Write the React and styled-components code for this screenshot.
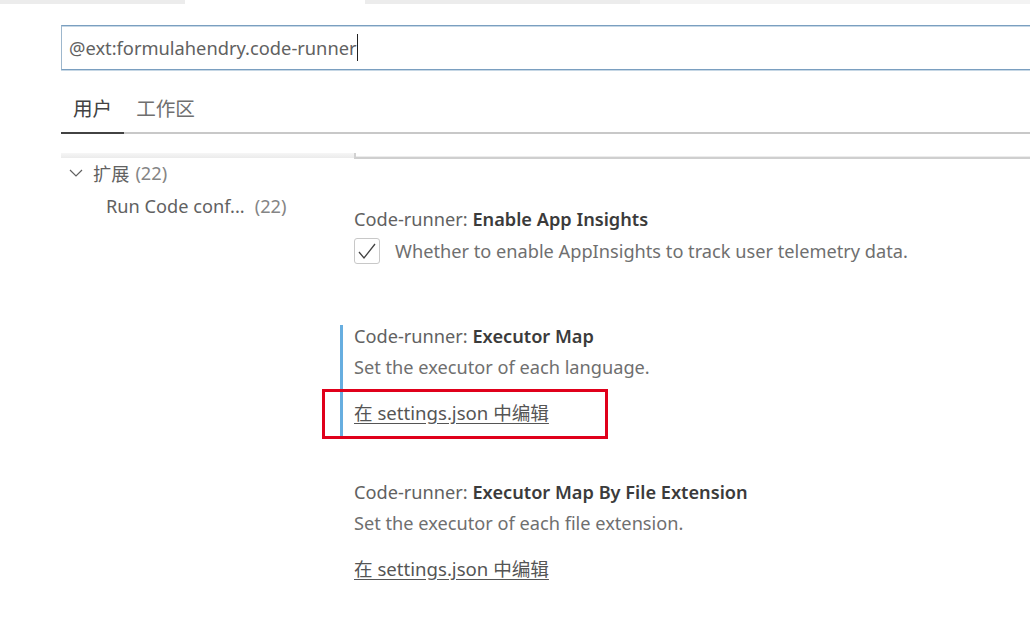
import React from 'react';
import styled, { createGlobalStyle } from 'styled-components';

const GlobalStyle = createGlobalStyle`
  html, body {
    margin: 0;
    padding: 0;
    background: #ffffff;
  }
  body {
    font-family: 'Noto Sans', 'Noto Sans CJK SC', sans-serif;
    color: #616161;
    overflow: hidden;
  }
`;

const Page = styled.div`
  width: 1030px;
  height: 618px;
  overflow: hidden;
  background: #fff;
`;

const TabStrip = styled.div`
  display: flex;
  height: 4px;
`;

const StripTab = styled.div`
  width: ${p => p.w ? `${p.w}px` : 'auto'};
  flex: ${p => p.w ? 'none' : 1};
  background: ${p => p.bg};
`;

const SearchRow = styled.div`
  padding: 21px 0 0 61px;
`;

const SearchBox = styled.div`
  height: 43px;
  width: 1000px;
  border: 1px solid #9db7cd;
  border-top-color: #7a9fc0;
  border-bottom-color: #7a9fc0;
  box-shadow: inset 0 1px 0 #c6d7e5, 0 1px 0 #c6d7e5;
  display: flex;
  align-items: center;
  padding-left: 7px;
  font-size: 18.3px;
  color: #616161;
  white-space: nowrap;
`;

const Caret = styled.span`
  display: inline-block;
  width: 1px;
  height: 27px;
  background: #222;
`;

const Tabs = styled.div`
  display: flex;
  margin: 20px 0 0 61px;
  border-bottom: 2px solid #c8c8c8;
`;

const Tab = styled.div`
  padding: 0 12px;
  height: 42px;
  line-height: 38px;
  font-size: 19.6px;
  color: ${p => p.active ? '#424242' : '#6f6f6f'};
  margin-bottom: -2px;
  border-bottom: 2px solid ${p => p.active ? '#424242' : 'transparent'};
`;

const Body = styled.div`
  margin: 19px 0 0 61px;
`;

const Edge = styled.div`
  display: grid;
  grid-template-columns: 293px 1fr;
  height: 6px;
`;

const EdgeShade = styled.div`
  height: 5px;
  background: linear-gradient(#f6f6f6, #ebebeb);
`;

const EdgeLine = styled.div`
  border-left: 2px solid #d2d2d2;
  border-bottom: 2px solid #cfcfcf;
  box-shadow: inset 0 -1px 0 #ececec;
`;

const Columns = styled.div`
  display: grid;
  grid-template-columns: 279px 1fr;
`;

const Tree = styled.div`
  margin-top: -3px;
`;

const TreeRow = styled.div`
  display: flex;
  align-items: center;
  height: 33px;
  padding-left: ${p => p.indent}px;
  font-size: 18.2px;
  color: #616161;
  white-space: nowrap;
`;

const Chevron = styled.svg`
  width: 16px;
  height: 16px;
  margin-right: 9px;
`;

const Count = styled.span`
  color: #858585;
  margin-left: ${p => p.gap}px;
`;

const List = styled.div`
  display: flex;
  flex-direction: column;
  gap: 45px;
  padding-top: 49px;
`;

const Item = styled.div`
  position: relative;
  border-left: 3px solid ${p => p.focused ? '#67aee0' : 'transparent'};
  padding: 0 0 ${p => p.bottom || 12}px 11px;
`;

const Title = styled.div`
  font-size: 18.2px;
  line-height: 22px;
  color: #616161;
  white-space: nowrap;
`;

const TitleKey = styled.span`
  font-weight: 600;
  color: #3b3b3b;
`;

const Description = styled.div`
  margin-top: 9px;
  font-size: 18.2px;
  line-height: 22px;
  color: #6f6f6f;
  white-space: nowrap;
`;

const CheckRow = styled.div`
  display: flex;
  align-items: center;
  height: 30px;
  margin-top: 6px;
  gap: 15px;
  font-size: 18.2px;
  color: #6f6f6f;
  white-space: nowrap;
`;

const CheckBox = styled.div`
  width: 24px;
  height: 24px;
  border: 1px solid #c8c8c8;
  border-radius: 3px;
  display: flex;
  align-items: center;
  justify-content: center;
`;

const LinkWrap = styled.div`
  position: relative;
  margin-top: 24px;
  height: 22px;
`;

const EditLink = styled.a`
  font-size: 18.6px;
  line-height: 22px;
  color: #555;
  text-decoration: underline;
  text-underline-offset: 3px;
  white-space: nowrap;
`;

const Highlight = styled.div`
  position: absolute;
  left: -32px;
  top: -13px;
  width: 280px;
  height: 44px;
  border: 3px solid #e0001b;
  pointer-events: none;
`;

function Setting({ name, desc, focused, marked, checkbox }) {
  return (
    <Item focused={focused} bottom={checkbox ? 14 : 12}>
      <Title>Code-runner: <TitleKey>{name}</TitleKey></Title>
      {checkbox ? (
        <CheckRow>
          <CheckBox>
            <svg width="24" height="24" viewBox="0 0 24 24">
              <path d="M4 13 L9 19 L20 5" fill="none" stroke="#424242" strokeWidth="1.3" />
            </svg>
          </CheckBox>
          {desc}
        </CheckRow>
      ) : (
        <>
          <Description>{desc}</Description>
          <LinkWrap>
            <EditLink>在 settings.json 中编辑</EditLink>
            {marked && <Highlight />}
          </LinkWrap>
        </>
      )}
    </Item>
  );
}

export default function App() {
  return (
    <Page>
      <GlobalStyle />
      <TabStrip>
        <StripTab w={185} bg="#ececec" />
        <StripTab w={180} bg="#ffffff" />
        <StripTab w={275} bg="#ececec" />
        <StripTab bg="#f3f3f3" />
      </TabStrip>
      <SearchRow>
        <SearchBox>
          @ext:formulahendry.code-runner<Caret />
        </SearchBox>
      </SearchRow>
      <Tabs>
        <Tab active>用户</Tab>
        <Tab>工作区</Tab>
      </Tabs>
      <Body>
        <Edge>
          <EdgeShade />
          <EdgeLine />
        </Edge>
        <Columns>
          <Tree>
            <TreeRow indent={7}>
              <Chevron viewBox="0 0 16 16">
                <path d="M2 5 L8 11 L14 5" fill="none" stroke="#616161" strokeWidth="1.2" />
              </Chevron>
              扩展<Count gap={6}>(22)</Count>
            </TreeRow>
            <TreeRow indent={45}>
              Run Code conf...<Count gap={10}>(22)</Count>
            </TreeRow>
          </Tree>
          <List>
            <Setting
              name="Enable App Insights"
              desc="Whether to enable AppInsights to track user telemetry data."
              checkbox
            />
            <Setting
              name="Executor Map"
              desc="Set the executor of each language."
              focused
              marked
            />
            <Setting
              name="Executor Map By File Extension"
              desc="Set the executor of each file extension."
            />
          </List>
        </Columns>
      </Body>
    </Page>
  );
}
